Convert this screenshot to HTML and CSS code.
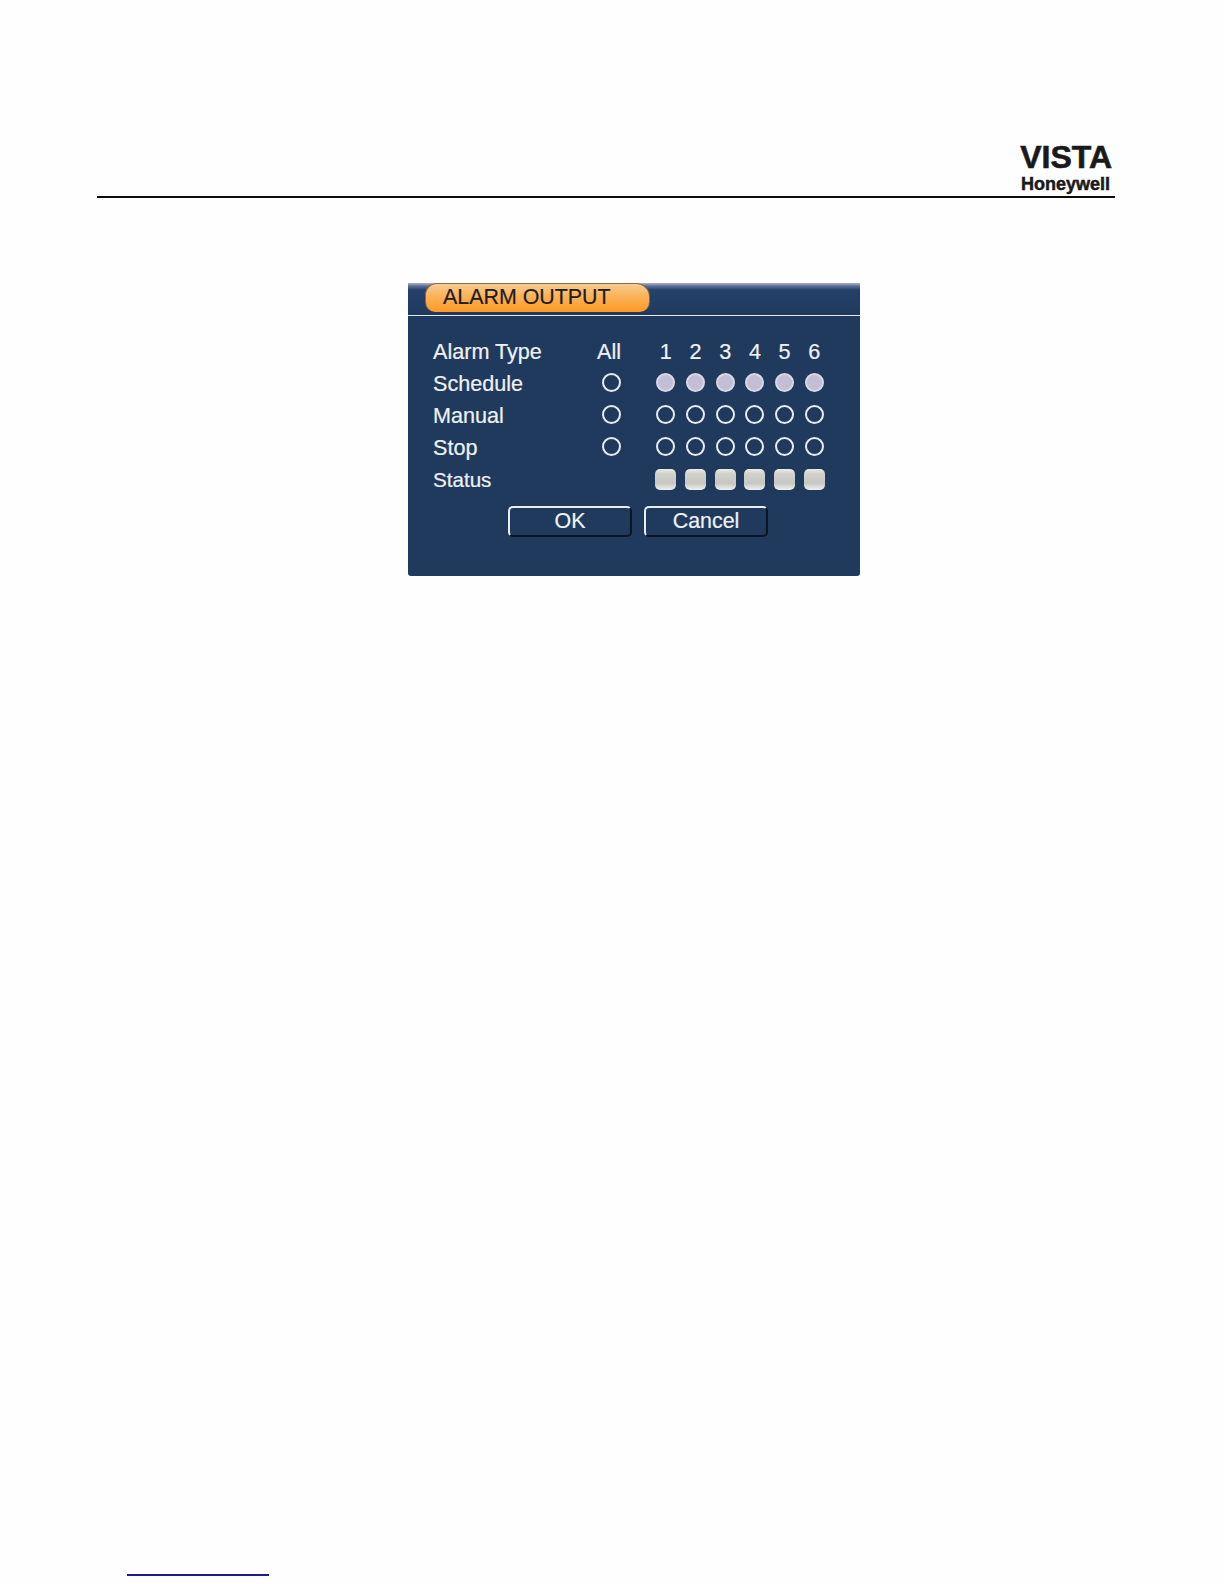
FILE: index.html
```html
<!DOCTYPE html>
<html lang="en">
<head>
    <meta charset="UTF-8">
    <meta name="viewport" content="width=device-width, initial-scale=1.0">
    <title>Alarm Output</title>
    <link rel="stylesheet" href="styles.css">
</head>
<body>
    <header class="page-header">
        <div class="logo">
            <div class="logo-vista">VISTA</div>
            <div class="logo-honeywell">Honeywell</div>
        </div>
    </header>

    <div class="dialog">
        <div class="title-bar">
            <div class="title-tab">ALARM OUTPUT</div>
        </div>

        <div class="alarm-grid">
            <div class="label">Alarm Type</div>
            <div class="head">All</div>
            <div class="spacer"></div>
            <div class="head">1</div>
            <div class="head">2</div>
            <div class="head">3</div>
            <div class="head">4</div>
            <div class="head">5</div>
            <div class="head">6</div>

            <div class="label">Schedule</div>
            <div class="cell cell-all"><span class="radio"></span></div>
            <div class="spacer"></div>
            <div class="cell"><span class="radio on"></span></div>
            <div class="cell"><span class="radio on"></span></div>
            <div class="cell"><span class="radio on"></span></div>
            <div class="cell"><span class="radio on"></span></div>
            <div class="cell"><span class="radio on"></span></div>
            <div class="cell"><span class="radio on"></span></div>

            <div class="label">Manual</div>
            <div class="cell cell-all"><span class="radio"></span></div>
            <div class="spacer"></div>
            <div class="cell"><span class="radio"></span></div>
            <div class="cell"><span class="radio"></span></div>
            <div class="cell"><span class="radio"></span></div>
            <div class="cell"><span class="radio"></span></div>
            <div class="cell"><span class="radio"></span></div>
            <div class="cell"><span class="radio"></span></div>

            <div class="label">Stop</div>
            <div class="cell cell-all"><span class="radio"></span></div>
            <div class="spacer"></div>
            <div class="cell"><span class="radio"></span></div>
            <div class="cell"><span class="radio"></span></div>
            <div class="cell"><span class="radio"></span></div>
            <div class="cell"><span class="radio"></span></div>
            <div class="cell"><span class="radio"></span></div>
            <div class="cell"><span class="radio"></span></div>

            <div class="label label-status">Status</div>
            <div class="spacer"></div>
            <div class="spacer"></div>
            <div class="cell-status"><span class="status"></span></div>
            <div class="cell-status"><span class="status"></span></div>
            <div class="cell-status"><span class="status"></span></div>
            <div class="cell-status"><span class="status"></span></div>
            <div class="cell-status"><span class="status"></span></div>
            <div class="cell-status"><span class="status"></span></div>
        </div>

        <div class="buttons">
            <div class="btn">OK</div>
            <div class="btn">Cancel</div>
        </div>
    </div>

    <div class="footer-link"></div>
</body>
</html>
```

FILE: styles.css
```css
* {
    margin: 0;
    padding: 0;
    box-sizing: border-box;
}

body {
    font-family: 'Liberation Sans', Arial, sans-serif;
    background: #fefefe;
    width: 1224px;
    height: 1584px;
    overflow: hidden;
}

.page-header {
    margin: 0 109px 0 97px;
    height: 198px;
    padding: 143px 5px 0 0;
    border-bottom: 2px solid #0c0c0c;
    display: flex;
    justify-content: flex-end;
}

.logo {
    width: 93px;
    color: #1a1a1a;
    font-weight: bold;
    text-align: right;
}

.logo-vista {
    font-size: 32px;
    line-height: 28px;
    margin-right: -2px;
    white-space: nowrap;
    -webkit-text-stroke: 0.6px #1a1a1a;
}

.logo-honeywell {
    font-size: 18px;
    line-height: 20px;
    margin-top: 3px;
    white-space: nowrap;
    -webkit-text-stroke: 0.5px #1a1a1a;
}

.dialog {
    width: 452px;
    height: 293px;
    margin: 86px 0 0 408px;
    background: #203a5e;
    border-radius: 0 0 3px 3px;
    color: #eef2f6;
    -webkit-text-stroke: 0.2px #eef2f6;
}

.title-bar {
    height: 33px;
    padding-left: 17px;
    border-bottom: 1px solid #e4ebf4;
    background: linear-gradient(#b2b4cf 0, #5c6f96 3px, #25406a 7px, #203a5e 100%);
}

.title-tab {
    width: 225px;
    height: 29px;
    margin-top: -1px;
    padding-left: 17px;
    position: relative;
    border: 1px solid #8a6a4a;
    border-bottom: none;
    border-radius: 12px 14px 10px 10px;
    background: linear-gradient(#f7cd92 0%, #fbb45c 40%, #fe9a24 100%);
    color: #1c1c22;
    font-size: 21.4px;
    line-height: 27px;
    white-space: nowrap;
    -webkit-text-stroke: 0.2px #1c1c22;
}

.alarm-grid {
    display: grid;
    grid-template-columns: 162px 28px 28px repeat(6, 29.7px);
    grid-auto-rows: 32px;
    margin: 19px 0 0 25px;
    font-size: 21.6px;
}

.label,
.head {
    display: flex;
    align-items: center;
    padding-top: 2px;
    line-height: 32px;
    white-space: nowrap;
}

.head {
    justify-content: center;
}

.label-status {
    font-size: 20.6px;
}

.cell,
.cell-status {
    display: flex;
    align-items: center;
    justify-content: center;
}

.cell {
    padding-bottom: 2px;
}

.cell-all {
    padding-left: 4px;
}

.cell-status {
    padding-top: 1px;
}

.radio {
    width: 19px;
    height: 19px;
    border: 2px solid #e6edf3;
    border-radius: 50%;
}

.radio.on {
    background: #c3bdd5;
    border-color: #d9d9e6;
}

.status {
    width: 21px;
    height: 21px;
    border-radius: 5px;
    background: linear-gradient(#ecece6 0%, #d2d2cd 22%, #c6c6c2 68%, #f0f0ec 100%);
}

.buttons {
    display: flex;
    gap: 12px;
    margin: 11px 0 0 100px;
}

.btn {
    width: 124px;
    height: 31px;
    border: 2px solid;
    border-color: #e8edf2 #0c1524 #0c1524 #e8edf2;
    border-radius: 5px;
    font-size: 21.4px;
    line-height: 27px;
    text-align: center;
}

.footer-link {
    width: 142px;
    height: 2px;
    margin: 998px 0 0 127px;
    background: #1c1c94;
}
```
